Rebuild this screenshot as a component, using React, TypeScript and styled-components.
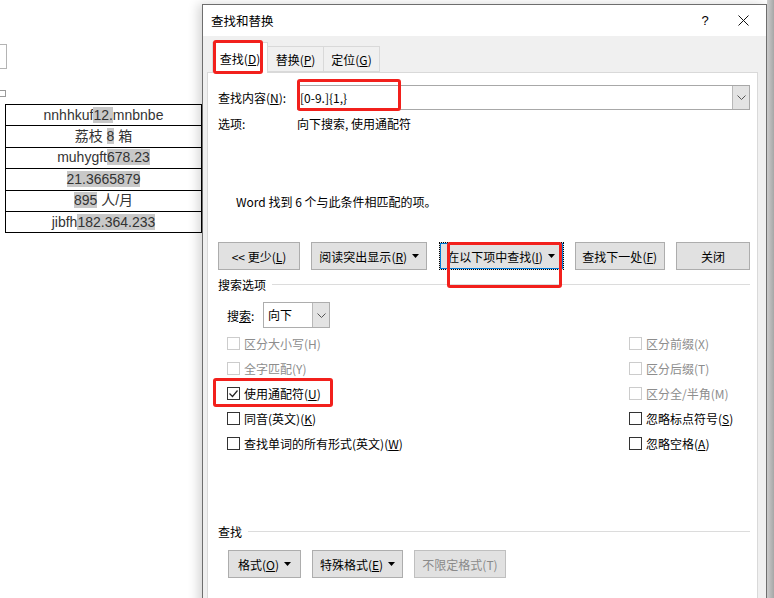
import React from "react";
import styled, { createGlobalStyle } from "styled-components";

const GlobalStyle = createGlobalStyle`
  html, body { margin: 0; padding: 0; background: #fff; }
  body {
    width: 774px;
    height: 598px;
    overflow: hidden;
    font-family: "Noto Sans CJK SC", "Noto Sans", sans-serif;
    font-size: 12px;
    color: #000;
  }
  * { box-sizing: border-box; }
`;

type Part = { t: string; hl?: boolean };

const rows: Part[][] = [
  [{ t: "nnhhkuf" }, { t: "12.", hl: true }, { t: "mnbnbe" }],
  [{ t: "荔枝 " }, { t: "8", hl: true }, { t: " 箱" }],
  [{ t: "muhygft" }, { t: "678.23", hl: true }],
  [{ t: "21.3665879", hl: true }],
  [{ t: "895", hl: true }, { t: " 人/月" }],
  [{ t: "jibfh" }, { t: "182.364.233", hl: true }],
];

type Opt = { label: string; key: string; off?: boolean; checked?: boolean };

const leftOpts: Opt[] = [
  { label: "区分大小写", key: "H", off: true },
  { label: "全字匹配", key: "Y", off: true },
  { label: "使用通配符", key: "U", checked: true },
  { label: "同音(英文)", key: "K" },
  { label: "查找单词的所有形式(英文)", key: "W" },
];

const rightOpts: Opt[] = [
  { label: "区分前缀", key: "X", off: true },
  { label: "区分后缀", key: "T", off: true },
  { label: "区分全/半角", key: "M", off: true },
  { label: "忽略标点符号", key: "S" },
  { label: "忽略空格", key: "A" },
];

const Caret = () => (
  <svg width="7" height="4" viewBox="0 0 7 4">
    <path d="M0 0h7L3.5 4z" fill="#000" />
  </svg>
);

const Chevron = () => (
  <svg width="9" height="5" viewBox="0 0 9 5">
    <path d="M0.5 0.5l4 4 4-4" fill="none" stroke="#555" strokeWidth="1" />
  </svg>
);

// label text with its accelerator key, e.g. 查找(D)
const Lbl: React.FC<{ t: string; k?: string; off?: boolean }> = ({ t, k, off }) => (
  <span>
    {t}
    {k && (off ? <>({k})</> : <>(<u>{k}</u>)</>)}
  </span>
);

const Option: React.FC<{ o: Opt }> = ({ o }) => (
  <OptRow $off={o.off}>
    <Box $off={o.off}>
      {o.checked && (
        <svg width="11" height="11" viewBox="0 0 11 11">
          <path d="M1.5 5.5l3 3 5-6" fill="none" stroke="#222" strokeWidth="1.2" />
        </svg>
      )}
    </Box>
    <Lbl t={o.label} k={o.key} off={o.off} />
  </OptRow>
);

export default function App() {
  return (
    <Screen>
      <GlobalStyle />
      <Doc>
        <FrameEdge />
        <TableHandle />
        <DocTable>
          <tbody>
            {rows.map((r, i) => (
              <tr key={i}>
                <Cell>
                  {r.map((p, j) =>
                    p.hl ? <Hl key={j}>{p.t}</Hl> : <span key={j}>{p.t}</span>
                  )}
                </Cell>
              </tr>
            ))}
          </tbody>
        </DocTable>
      </Doc>

      <Dialog>
        <TitleBar>
          <TitleText>查找和替换</TitleText>
          <HelpBtn>?</HelpBtn>
          <CloseBtn>
            <svg width="11" height="11" viewBox="0 0 11 11">
              <path d="M0.5 0.5l10 10M10.5 0.5l-10 10" stroke="#111" strokeWidth="1" />
            </svg>
          </CloseBtn>
        </TitleBar>
        <Body>
          <Tabs>
            <Tab $active>
              <Lbl t="查找" k="D" />
            </Tab>
            <Tab>
              <Lbl t="替换" k="P" />
            </Tab>
            <Tab>
              <Lbl t="定位" k="G" />
            </Tab>
          </Tabs>
          <Panel>
            <FindRow>
              <FieldLabel>
                <Lbl t="查找内容" k="N" />:
              </FieldLabel>
              <Combo>
                <ComboText>[0-9.]{"{1,}"}</ComboText>
                <ComboDrop>
                  <Chevron />
                </ComboDrop>
              </Combo>
            </FindRow>
            <InfoRow>
              <FieldLabel>选项:</FieldLabel>
              <span>向下搜索, 使用通配符</span>
            </InfoRow>
            <FoundText>Word 找到 6 个与此条件相匹配的项。</FoundText>

            <ButtonRow>
              <Button $w={82}>
                <Lbl t="<< 更少" k="L" />
              </Button>
              <Button $w={116}>
                <Lbl t="阅读突出显示" k="R" />
                <Caret />
              </Button>
              <Button $w={125} $focus>
                <Lbl t="在以下项中查找" k="I" />
                <Caret />
              </Button>
              <Button $w={90}>
                <Lbl t="查找下一处" k="F" />
              </Button>
              <Button $w={74}>
                <Lbl t="关闭" />
              </Button>
            </ButtonRow>

            <GroupHeader>
              <span>搜索选项</span>
              <Rule />
            </GroupHeader>

            <SearchRow>
              <SearchLabel>
                搜<u>索</u>:
              </SearchLabel>
              <Select>
                <SelectText>向下</SelectText>
                <SelectDrop>
                  <Chevron />
                </SelectDrop>
              </Select>
            </SearchRow>

            <Options>
              <OptCol>
                {leftOpts.map((o) => (
                  <Option key={o.label} o={o} />
                ))}
              </OptCol>
              <OptCol>
                {rightOpts.map((o) => (
                  <Option key={o.label} o={o} />
                ))}
              </OptCol>
            </Options>

            <GroupHeader $top={67}>
              <span>查找</span>
              <Rule />
            </GroupHeader>

            <BottomRow>
              <Button $w={73}>
                <Lbl t="格式" k="O" />
                <Caret />
              </Button>
              <Button $w={91}>
                <Lbl t="特殊格式" k="E" />
                <Caret />
              </Button>
              <Button $w={92} $off>
                <Lbl t="不限定格式" k="T" off />
              </Button>
            </BottomRow>
          </Panel>
        </Body>
      </Dialog>
      <BackEdge />

      <Mark $x={213} $y={40} $w={50} $h={34} />
      <Mark $x={297} $y={79} $w={104} $h={32} />
      <Mark $x={447} $y={242} $w={115} $h={46} />
      <Mark $x={213} $y={378} $w={120} $h={29} />
    </Screen>
  );
}

const Screen = styled.div`
  position: relative;
  display: flex;
  width: 774px;
  height: 598px;
  overflow: hidden;
  background: #fff;
`;

const Doc = styled.div`
  flex: none;
  width: 202px;
  display: flex;
  flex-direction: column;
  align-items: flex-start;
`;

const FrameEdge = styled.div`
  margin-top: 44px;
  width: 7px;
  height: 25px;
  border: 1px solid #b4b4b4;
  border-left: none;
`;

const TableHandle = styled.div`
  margin-top: 21px;
  width: 6px;
  height: 7px;
  border: 1px solid #9a9a9a;
  border-left: none;
  background: #fff;
`;

const DocTable = styled.table`
  margin: 7px 0 0 5px;
  width: 197px;
  border-collapse: collapse;
  font-family: "Liberation Sans", "Noto Sans CJK SC", sans-serif;
  font-size: 14px;
  color: #333;
`;

const Cell = styled.td`
  height: 21.4px;
  padding: 0;
  border: 1px solid #000;
  text-align: center;
  line-height: 19px;
  white-space: nowrap;
`;

const Hl = styled.span`
  background: #c8c8c8;
`;

const Dialog = styled.div`
  flex: none;
  width: 565px;
  height: 640px;
  margin-top: 4px;
  border: 1px solid #6e6e6e;
  background: #f0f0f0;
  box-shadow: -4px 0 10px rgba(0, 0, 0, 0.16);
  display: flex;
  flex-direction: column;
  z-index: 1;
`;

const TitleBar = styled.div`
  height: 31px;
  background: #fff;
  display: flex;
  align-items: center;
  padding-left: 8px;
  font-size: 12.5px;
`;

const TitleText = styled.div`
  flex: 1;
`;

const HelpBtn = styled.div`
  width: 30px;
  text-align: center;
  font-family: "Liberation Sans", sans-serif;
  font-size: 13px;
`;

const CloseBtn = styled.div`
  width: 46px;
  height: 31px;
  display: flex;
  align-items: center;
  justify-content: center;
`;

const Body = styled.div`
  flex: 1;
  display: flex;
  flex-direction: column;
  padding: 5px 8px 0 4px;
`;

const Tabs = styled.div`
  display: flex;
  align-items: flex-end;
  height: 31px;
  margin-left: 5px;
`;

const Tab = styled.div<{ $active?: boolean }>`
  position: relative;
  height: ${(p) => (p.$active ? 31 : 26)}px;
  width: ${(p) => (p.$active ? 56 : 57)}px;
  margin-left: -1px;
  margin-bottom: ${(p) => (p.$active ? -1 : 0)}px;
  border: 1px solid #d9d9d9;
  border-bottom: ${(p) => (p.$active ? "none" : "1px solid #d9d9d9")};
  background: ${(p) => (p.$active ? "#fff" : "#f0f0f0")};
  z-index: ${(p) => (p.$active ? 2 : 0)};
  display: flex;
  align-items: center;
  justify-content: center;
  padding-top: ${(p) => (p.$active ? 0 : 1)}px;
  &:first-child {
    margin-left: 0;
  }
`;

const Panel = styled.div`
  flex: 1;
  background: #fff;
  border: 1px solid #d9d9d9;
  padding: 0 7px 0 10px;
  display: flex;
  flex-direction: column;
`;

const FindRow = styled.div`
  margin-top: 12px;
  display: flex;
  align-items: center;
`;

const FieldLabel = styled.div`
  width: 79px;
  flex: none;
`;

const Combo = styled.div`
  flex: 1;
  height: 25px;
  border: 1px solid #a8a8a8;
  display: flex;
`;

const ComboText = styled.div`
  flex: 1;
  padding-left: 2px;
  line-height: 23px;
`;

const ComboDrop = styled.div`
  width: 17px;
  background: #e3e3e3;
  border-left: 1px solid #b8b8b8;
  display: flex;
  align-items: center;
  justify-content: center;
`;

const InfoRow = styled.div`
  margin-top: 5px;
  height: 17px;
  display: flex;
  align-items: center;
`;

const FoundText = styled.div`
  margin-top: 61px;
  padding-left: 18px;
  height: 17px;
  line-height: 17px;
`;

const ButtonRow = styled.div`
  margin-top: 32px;
  display: flex;
  justify-content: space-between;
`;

const Button = styled.div<{ $w: number; $focus?: boolean; $off?: boolean }>`
  width: ${(p) => p.$w}px;
  height: 28px;
  flex: none;
  background: #e1e1e1;
  border: 1px ${(p) => (p.$focus ? "dotted #000" : "solid " + (p.$off ? "#bfbfbf" : "#adadad"))};
  box-shadow: ${(p) => (p.$focus ? "inset 0 0 0 1px #0078d7" : "none")};
  color: ${(p) => (p.$off ? "#8a8a8a" : "#000")};
  display: flex;
  align-items: center;
  justify-content: center;
  gap: 5px;
  white-space: nowrap;
`;

const GroupHeader = styled.div<{ $top?: number }>`
  margin-top: ${(p) => p.$top ?? 6}px;
  height: 16px;
  display: flex;
  align-items: center;
  gap: 6px;
`;

const Rule = styled.div`
  flex: 1;
  height: 1px;
  background: #dcdcdc;
`;

const SearchRow = styled.div`
  margin-top: 10px;
  padding-left: 9px;
  display: flex;
  align-items: center;
`;

const SearchLabel = styled.div`
  width: 36px;
`;

const Select = styled.div`
  width: 67px;
  height: 26px;
  border: 1px solid #adadad;
  display: flex;
  background: #fff;
`;

const SelectText = styled.div`
  flex: 1;
  padding-left: 4px;
  line-height: 24px;
`;

const SelectDrop = styled.div`
  width: 17px;
  background: #e3e3e3;
  border-left: 1px solid #b8b8b8;
  display: flex;
  align-items: center;
  justify-content: center;
`;

const Options = styled.div`
  margin-top: 3px;
  padding-left: 9px;
  display: grid;
  grid-template-columns: 1fr 121px;
`;

const OptCol = styled.div`
  display: flex;
  flex-direction: column;
`;

const OptRow = styled.div<{ $off?: boolean }>`
  height: 25px;
  display: flex;
  align-items: center;
  gap: 4px;
  color: ${(p) => (p.$off ? "#8d8d8d" : "#000")};
  white-space: nowrap;
`;

const Box = styled.div<{ $off?: boolean }>`
  width: 13px;
  height: 13px;
  flex: none;
  border: 1px solid ${(p) => (p.$off ? "#cccccc" : "#333")};
  background: #fff;
  display: flex;
  align-items: center;
  justify-content: center;
`;

const BottomRow = styled.div`
  margin-top: 11px;
  padding-left: 10px;
  display: flex;
  gap: 11px;
`;

const BackEdge = styled.div`
  flex: 1;
  background: linear-gradient(to right, #d2d2d2, #a6a6a6);
`;

const Mark = styled.div<{ $x: number; $y: number; $w: number; $h: number }>`
  position: absolute;
  left: ${(p) => p.$x}px;
  top: ${(p) => p.$y}px;
  width: ${(p) => p.$w}px;
  height: ${(p) => p.$h}px;
  border: 3px solid #f2201c;
  border-radius: 3px;
  z-index: 5;
`;
